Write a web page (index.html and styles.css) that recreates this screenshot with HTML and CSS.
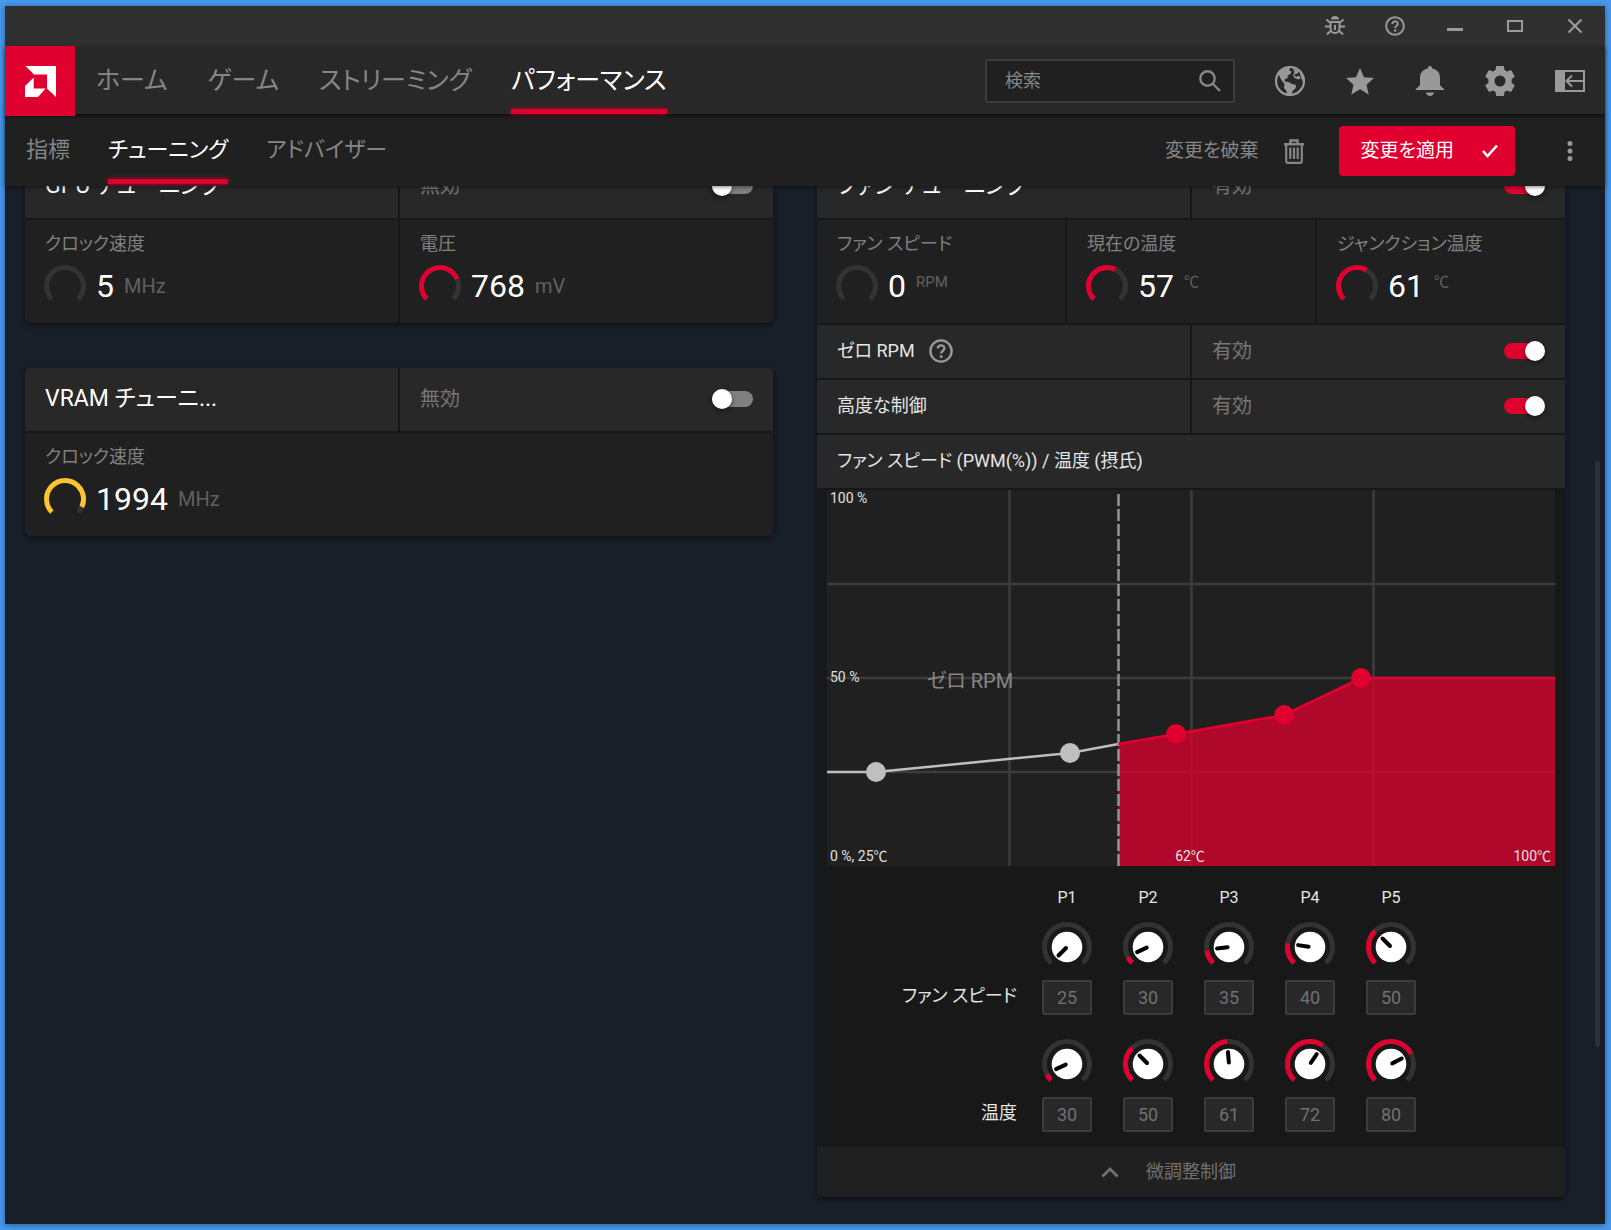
FILE: index.html
```html
<!DOCTYPE html>
<html lang="ja">
  <head>
    <meta charset="UTF-8" />
    <meta name="viewport" content="width=device-width, initial-scale=1.0" />
    <title>パフォーマンス - チューニング</title>

    <link rel="stylesheet" href="styles.css">
  </head>
  <body>
    <svg class="defs" aria-hidden="true">
      <symbol id="help" viewBox="0 0 24 24">
        <circle cx="12" cy="12" r="10.6" fill="none" stroke="currentColor" stroke-width="2.4" />
        <path d="M8.8 9.6c0-4.2 6.6-4.2 6.6-.3 0 2.4-3.2 2.5-3.2 5.1" fill="none" stroke="currentColor" stroke-width="2.3" />
        <circle cx="12.2" cy="17.5" r="1.5" fill="currentColor" />
      </symbol>
      <symbol id="knob" viewBox="0 0 50 50">
        <circle class="track" cx="25" cy="25" r="22.5" pathLength="360" stroke-dasharray="270 360" transform="rotate(135 25 25)" />
        <circle cx="25" cy="25" r="15.3" fill="#fff" />
      </symbol>
    </svg>

    <div class="window">
      <div class="titlebar">
        <button aria-label="バグ報告">
          <svg width="20" height="20" viewBox="0 0 20 20" fill="none" stroke="currentColor" stroke-width="2">
            <path d="M6 3.6a4 3.6 0 0 1 8 0z" fill="currentColor" stroke="none" />
            <path d="M5.5 6h9v6.5c0 6-9 6-9 0zM0 10.5h5M15 10.5h5M1.5 3.5L5.5 7M18.5 3.5L14.5 7M2 18.5L6 14.5M18 18.5L14 14.5M10 9v5" />
          </svg>
        </button>
        <button aria-label="ヘルプ"><svg width="20" height="20"><use href="#help" /></svg></button>
        <button aria-label="最小化"><svg width="16" height="20"><path d="M0 12h16v3H0z" fill="currentColor" /></svg></button>
        <button aria-label="最大化"><svg width="16" height="20"><path d="M1 5h14v10H1z" fill="none" stroke="currentColor" stroke-width="2" /></svg></button>
        <button aria-label="閉じる"><svg width="16" height="20"><path d="M1.5 3.5l13 13M14.5 3.5l-13 13" stroke="currentColor" stroke-width="2.2" /></svg></button>
      </div>

      <header class="header">
        <a class="logo" href="#" aria-label="AMD">
          <svg width="31" height="31" viewBox="0 0 31 31" fill="#fff">
            <path d="M.5 0H31v31l-9-8.5V8.5H9z" />
            <path d="M8.7 11.5v11h12L13 31H0V20z" />
          </svg>
        </a>
        <nav class="nav">
          <a href="#">ホーム</a>
          <a href="#">ゲーム</a>
          <a href="#">ストリーミング</a>
          <a href="#" class="active">パフォーマンス</a>
        </nav>
        <label class="search">
          <input type="text" placeholder="検索" aria-label="検索" />
          <svg width="22" height="22" viewBox="0 0 22 22" fill="none" stroke="currentColor" stroke-width="2.4">
            <circle cx="8.5" cy="8.5" r="7.2" />
            <path d="M13.5 13.5l7.5 7.5" />
          </svg>
        </label>
        <div class="tools">
          <button aria-label="ウェブ">
            <svg width="30" height="30" viewBox="0 0 30 30">
              <circle cx="15" cy="15" r="14" fill="#282828" stroke="currentColor" stroke-width="2.2" />
              <g fill="currentColor">
                <path d="M3 8.5C6 4 10.500 1.500 15.500 1.500L14 4l2.500 1.500-1 2.500-3 1.500.5 2-3.500 2 .5 2 3.500.5 3.500 2 4 1-.5 3.500-3 2.500-1 4-2.500 3-1.500-1-1-6-2.500-3 .5-4L6 13.500 4.500 10z" />
                <path d="M17.500 2l6.500 3-1.500 2.500-3.500 1 2 2.500 3-1.500 1.500 2.500-2 1.500-4-1.500-1.500-3 1.500-3z" />
                <path d="M22 3.500c5 3.500 7 8 6.500 13l-2-3.500-1.500-5.500z" />
              </g>
            </svg>
          </button>
          <button aria-label="お気に入り">
            <svg width="28" height="28" viewBox="0 0 28 28"><path d="M14 1l4 9.2 10 .9-7.5 6.6 2.2 9.8L14 22.3l-8.700 5.200 2.200-9.800L0 11.100l10-.9z" fill="currentColor" /></svg>
          </button>
          <button aria-label="通知">
            <svg width="30" height="30" viewBox="0 0 30 30" fill="currentColor">
              <path d="M12.800 2.500C12.800-.8 17.200-.8 17.200 2.500 22.500 3.500 25 7 25 12v6.500c0 2 4.500 4 4.500 5.500H.5C.5 22.500 5 20.500 5 18.500V12c0-5 2.500-8.500 7.800-9.500zM11 26.500h8c-.5 4.600-7.500 4.600-8 0z" />
            </svg>
          </button>
          <button aria-label="設定">
            <svg width="30" height="30" viewBox="0 0 30 30">
              <path fill="currentColor" fill-rule="evenodd" d="M11.2 0h7.600l.7 4 2.600 1.500 3.900-1.500 3.800 6.600-3.200 2.700v3.400l3.200 2.700-3.800 6.600-3.900-1.500-2.600 1.500-.7 4h-7.600l-.7-4-2.600-1.500L4 26 .2 19.400l3.200-2.700v-3.400L.2 10.600 4 4l3.900 1.500L10.500 4zM15 9.500a5.500 5.500 0 1 0 0 11 5.500 5.500 0 0 0 0-11z" />
            </svg>
          </button>
          <button aria-label="サイドバー">
            <svg width="30" height="22" viewBox="0 0 30 22" fill="none" stroke="currentColor" stroke-width="2">
              <path d="M0 0h10v22H0z" fill="currentColor" stroke="none" />
              <path d="M1 1h28v20H1zM11.5 11H29M17 5.5L11.5 11l5.500 5.500" />
            </svg>
          </button>
        </div>
      </header>

      <div class="subheader">
        <nav class="tabs">
          <a href="#">指標</a>
          <a href="#" class="active">チューニング</a>
          <a href="#">アドバイザー</a>
        </nav>
        <button class="discard">
          変更を破棄
          <svg width="20" height="25" viewBox="0 0 20 25" fill="none" stroke="currentColor" stroke-width="2">
            <path d="M0 5.2h20M6.5 5V1.500h7V5" stroke-width="2.6" />
            <path d="M2.2 6v16.500c0 1 .5 1.300 1.300 1.300h13c.8 0 1.300-.3 1.300-1.300V6M6.300 8.500V20M10 8.500V20M13.700 8.500V20" stroke-width="2.2" />
          </svg>
        </button>
        <button class="apply">
          変更を適用
          <svg width="16" height="14" viewBox="0 0 16 14"><path d="M1 7l4.5 5L15 1.500" fill="none" stroke="#fff" stroke-width="2.6" /></svg>
        </button>
        <button class="more" aria-label="その他">
          <svg width="6" height="20" fill="currentColor"><circle cx="3" cy="2.5" r="2.5" /><circle cx="3" cy="10" r="2.5" /><circle cx="3" cy="17.5" r="2.5" /></svg>
        </button>
      </div>

      <main class="content">
        <div class="columns">
          <div class="column">
            <section class="card">
              <div class="row head">
                <h2 class="cell">GPU チューニング</h2>
                <label class="cell state">無効 <input type="checkbox" class="switch" /></label>
              </div>
              <div class="row">
                <div class="stat">
                  <h3>クロック速度</h3>
                  <div class="reading">
                    <svg class="gauge" width="42" height="42"><circle class="track" cx="21" cy="21" r="18.5" pathLength="360" stroke-dasharray="270 360" /></svg>
                    <b>5</b><span>MHz</span>
                  </div>
                </div>
                <div class="stat">
                  <h3>電圧</h3>
                  <div class="reading">
                    <svg class="gauge" width="42" height="42"><circle class="track" cx="21" cy="21" r="18.5" pathLength="360" stroke-dasharray="270 360" /><circle class="level" cx="21" cy="21" r="18.5" pathLength="360" stroke-dasharray="203 360" /></svg>
                    <b>768</b><span>mV</span>
                  </div>
                </div>
              </div>
            </section>

            <section class="card">
              <div class="row head">
                <h2 class="cell">VRAM チューニ...</h2>
                <label class="cell state">無効 <input type="checkbox" class="switch" /></label>
              </div>
              <div class="row">
                <div class="stat">
                  <h3>クロック速度</h3>
                  <div class="reading">
                    <svg class="gauge" width="42" height="42"><circle class="track" cx="21" cy="21" r="18.5" pathLength="360" stroke-dasharray="270 360" /><circle class="level warn" cx="21" cy="21" r="18.5" pathLength="360" stroke-dasharray="250 360" /></svg>
                    <b>1994</b><span>MHz</span>
                  </div>
                </div>
              </div>
            </section>
          </div>

          <section class="card fan">
            <div class="row head">
              <h2 class="cell">ファン チューニング</h2>
              <label class="cell state">有効 <input type="checkbox" class="switch" checked /></label>
            </div>
            <div class="row">
              <div class="stat">
                <h3>ファン スピード</h3>
                <div class="reading">
                  <svg class="gauge" width="42" height="42"><circle class="track" cx="21" cy="21" r="18.5" pathLength="360" stroke-dasharray="270 360" /></svg>
                  <b>0</b><span class="small">RPM</span>
                </div>
              </div>
              <div class="stat">
                <h3>現在の温度</h3>
                <div class="reading">
                  <svg class="gauge" width="42" height="42"><circle class="track" cx="21" cy="21" r="18.5" pathLength="360" stroke-dasharray="270 360" /><circle class="level" cx="21" cy="21" r="18.5" pathLength="360" stroke-dasharray="162 360" /></svg>
                  <b>57</b><span class="small">℃</span>
                </div>
              </div>
              <div class="stat">
                <h3>ジャンクション温度</h3>
                <div class="reading">
                  <svg class="gauge" width="42" height="42"><circle class="track" cx="21" cy="21" r="18.5" pathLength="360" stroke-dasharray="270 360" /><circle class="level" cx="21" cy="21" r="18.5" pathLength="360" stroke-dasharray="166 360" /></svg>
                  <b>61</b><span class="small">℃</span>
                </div>
              </div>
            </div>
            <div class="row">
              <div class="cell">ゼロ RPM <svg class="info" width="24" height="24"><use href="#help" /></svg></div>
              <label class="cell state">有効 <input type="checkbox" class="switch" checked /></label>
            </div>
            <div class="row">
              <div class="cell">高度な制御</div>
              <label class="cell state">有効 <input type="checkbox" class="switch" checked /></label>
            </div>
            <div class="row">
              <div class="cell">ファン スピード (PWM(%)) / 温度 (摂氏)</div>
            </div>

            <div class="panel">
              <svg class="chart" viewBox="0 0 728 376">
                <rect width="728" height="376" fill="#202020" />
                <path class="grid" d="M182.5 0v376M364.5 0v376M546.5 0v376M0 94h728M0 188h728M0 282h728" />
                <path d="M291.5 254L349 244 457 225 534 188H728V376H291.5z" fill="#e0002f" fill-opacity=".75" />
                <path d="M0 282H49L243 263 291.5 254" fill="none" stroke="#bfbfbd" stroke-width="2.5" />
                <path d="M291.5 4v372" stroke="#949494" stroke-width="2.5" stroke-dasharray="12 3" />
                <path d="M291.5 254L349 244 457 225 534 188H728" fill="none" stroke="#e0002f" stroke-width="2.5" />
                <g fill="#bfbfbd"><circle cx="49" cy="282" r="10" /><circle cx="243" cy="263" r="10" /></g>
                <g fill="#e0002f"><circle cx="349" cy="244" r="10" /><circle cx="457" cy="225" r="10" /><circle cx="534" cy="188" r="10" /></g>
                <text x="3" y="13">100 %</text>
                <text x="3" y="192">50 %</text>
                <text x="3" y="371">0 %, 25℃</text>
                <text x="363" y="371" text-anchor="middle">62℃</text>
                <text x="724" y="371" text-anchor="end">100℃</text>
                <text x="143" y="198" text-anchor="middle" class="zone">ゼロ RPM</text>
              </svg>

              <div class="points">
                <span></span>
                <span class="name">P1</span>
                <span class="name">P2</span>
                <span class="name">P3</span>
                <span class="name">P4</span>
                <span class="name">P5</span>

                <span class="label">ファン スピード</span>
                <label class="point">
                  <svg width="50" height="50"><use href="#knob" /><path class="hand" d="M24 26l-7.5 7.5" /></svg>
                  <input type="text" value="25" aria-label="P1 ファン スピード" />
                </label>
                <label class="point">
                  <svg width="50" height="50"><use href="#knob" /><circle class="level" cx="25" cy="25" r="22.5" pathLength="360" stroke-dasharray="18 360" transform="rotate(135 25 25)" /><path class="hand" d="M24 26l-7.5 7.5" transform="rotate(20 25 25)" /></svg>
                  <input type="text" value="30" aria-label="P2 ファン スピード" />
                </label>
                <label class="point">
                  <svg width="50" height="50"><use href="#knob" /><circle class="level" cx="25" cy="25" r="22.5" pathLength="360" stroke-dasharray="36 360" transform="rotate(135 25 25)" /><path class="hand" d="M24 26l-7.5 7.5" transform="rotate(38 25 25)" /></svg>
                  <input type="text" value="35" aria-label="P3 ファン スピード" />
                </label>
                <label class="point">
                  <svg width="50" height="50"><use href="#knob" /><circle class="level" cx="25" cy="25" r="22.5" pathLength="360" stroke-dasharray="54 360" transform="rotate(135 25 25)" /><path class="hand" d="M24 26l-7.5 7.5" transform="rotate(54 25 25)" /></svg>
                  <input type="text" value="40" aria-label="P4 ファン スピード" />
                </label>
                <label class="point">
                  <svg width="50" height="50"><use href="#knob" /><circle class="level" cx="25" cy="25" r="22.5" pathLength="360" stroke-dasharray="90 360" transform="rotate(135 25 25)" /><path class="hand" d="M24 26l-7.5 7.5" transform="rotate(90 25 25)" /></svg>
                  <input type="text" value="50" aria-label="P5 ファン スピード" />
                </label>

                <span class="label">温度</span>
                <label class="point">
                  <svg width="50" height="50"><use href="#knob" /><circle class="level" cx="25" cy="25" r="22.5" pathLength="360" stroke-dasharray="18 360" transform="rotate(135 25 25)" /><path class="hand" d="M24 26l-7.5 7.5" transform="rotate(20 25 25)" /></svg>
                  <input type="text" value="30" aria-label="P1 温度" />
                </label>
                <label class="point">
                  <svg width="50" height="50"><use href="#knob" /><circle class="level" cx="25" cy="25" r="22.5" pathLength="360" stroke-dasharray="90 360" transform="rotate(135 25 25)" /><path class="hand" d="M24 26l-7.5 7.5" transform="rotate(90 25 25)" /></svg>
                  <input type="text" value="50" aria-label="P2 温度" />
                </label>
                <label class="point">
                  <svg width="50" height="50"><use href="#knob" /><circle class="level" cx="25" cy="25" r="22.5" pathLength="360" stroke-dasharray="130 360" transform="rotate(135 25 25)" /><path class="hand" d="M24 26l-7.5 7.5" transform="rotate(130 25 25)" /></svg>
                  <input type="text" value="61" aria-label="P3 温度" />
                </label>
                <label class="point">
                  <svg width="50" height="50"><use href="#knob" /><circle class="level" cx="25" cy="25" r="22.5" pathLength="360" stroke-dasharray="169 360" transform="rotate(135 25 25)" /><path class="hand" d="M24 26l-7.5 7.5" transform="rotate(169 25 25)" /></svg>
                  <input type="text" value="72" aria-label="P4 温度" />
                </label>
                <label class="point">
                  <svg width="50" height="50"><use href="#knob" /><circle class="level" cx="25" cy="25" r="22.5" pathLength="360" stroke-dasharray="198 360" transform="rotate(135 25 25)" /><path class="hand" d="M24 26l-7.5 7.5" transform="rotate(198 25 25)" /></svg>
                  <input type="text" value="80" aria-label="P5 温度" />
                </label>
              </div>
            </div>

            <button class="collapse">
              <svg width="18" height="12" viewBox="0 0 18 12"><path d="M1.5 10.5L9 3l7.5 7.5" fill="none" stroke="currentColor" stroke-width="2.8" /></svg>
              微調整制御
            </button>
          </section>
        </div>
        <div class="scrollbar"></div>
      </main>
    </div>
  </body>
</html>
```

FILE: styles.css
```css
* {
  box-sizing: border-box;
}

body {
  margin: 0;
  height: 100vh;
  padding: 6px 6px 6px 5px;
  background-color: #4798ec;
  font-family: Roboto, "Noto Sans CJK JP", sans-serif;
  font-feature-settings: "palt";
  font-size: 18px;
  line-height: 24px;
  color: #e6e6e6;
}

a {
  color: inherit;
  text-decoration: none;
}

button,
input {
  font: inherit;
  font-feature-settings: inherit;
  color: inherit;
}

button {
  display: flex;
  align-items: center;
  justify-content: center;
  padding: 0;
  border: 0;
  background: none;
}

h2,
h3 {
  margin: 0;
  font-weight: 400;
}

svg {
  display: block;
  flex: none;
}

.defs {
  position: absolute;
  width: 0;
  height: 0;
}

.window {
  display: flex;
  flex-direction: column;
  height: 100%;
  background-color: #181f28;
  box-shadow: 0 1px 6px rgba(0, 0, 0, 0.4);
}

/* top bars */
.titlebar {
  display: flex;
  justify-content: flex-end;
  height: 40px;
  background-color: #303030;
  color: #999;
}

.titlebar button {
  width: 60px;
}

.header {
  position: relative;
  z-index: 3;
  display: flex;
  align-items: center;
  height: 68px;
  padding-top: 2px;
  background-color: #282828;
  color: #868686;
  box-shadow: 0 2px 4px rgba(0, 0, 0, 0.6);
}

.logo {
  display: flex;
  align-items: center;
  justify-content: center;
  align-self: stretch;
  width: 70px;
  margin: -2px 0;
  background-color: #e0002f;
}

.nav,
.tabs {
  display: flex;
  align-self: stretch;
  gap: 40px;
  padding-left: 21px;
  font-size: 25px;
}

.nav a,
.tabs a {
  position: relative;
  display: flex;
  align-items: center;
  white-space: nowrap;
}

.nav .active,
.tabs .active {
  color: #fff;
}

.active::after {
  content: "";
  position: absolute;
  left: 0;
  right: 0;
  bottom: 0;
  height: 5px;
  background-color: #e0002f;
  box-shadow: 0 0 5px rgba(224, 0, 47, 0.8);
}

.search {
  display: flex;
  align-items: center;
  width: 250px;
  height: 44px;
  margin-left: auto;
  padding: 0 12px 0 18px;
  border: 2px solid #3d3d3d;
  border-radius: 2px;
  background-color: #202020;
}

.search input {
  flex: 1;
  min-width: 0;
  padding: 0;
  border: 0;
  outline: 0;
  background: none;
}

.search input::placeholder {
  color: #868686;
}

.tools {
  display: flex;
  margin-left: 20px;
  color: #999;
}

.tools button {
  width: 70px;
  height: 44px;
}

.subheader {
  position: relative;
  z-index: 2;
  display: flex;
  align-items: center;
  height: 72px;
  padding-top: 2px;
  background-color: #202020;
  color: #868686;
  box-shadow: 0 1px 4px rgba(0, 0, 0, 0.5);
}

.tabs {
  gap: 38px;
  margin-right: auto;
  padding-bottom: 2px;
  font-size: 22px;
}

.discard {
  gap: 26px;
  font-size: 19px;
}

.apply {
  gap: 28px;
  height: 50px;
  margin-left: 35px;
  padding: 0 17px 0 21px;
  border-radius: 4px;
  background-color: #e0002f;
  font-size: 19px;
  color: #fff;
}

.more {
  width: 70px;
  height: 50px;
  margin-left: 20px;
  color: #999;
}

/* scrolled page */
.content {
  position: relative;
  flex: 1;
  min-height: 0;
  overflow: hidden;
}

.columns {
  display: grid;
  grid-template-columns: 1fr 1fr;
  align-items: start;
  gap: 44px;
  margin-top: -31px;
  padding: 0 40px 0 20px;
}

.column {
  display: grid;
  gap: 45px;
}

.scrollbar {
  position: absolute;
  top: 275px;
  right: 5px;
  width: 5px;
  height: 586px;
  border-radius: 3px;
  background-color: #29323c;
}

.card {
  display: grid;
  gap: 2px;
  border-radius: 5px;
  background-color: #171717;
  box-shadow: 0 2px 5px rgba(0, 0, 0, 0.5);
  overflow: hidden;
}

.row {
  display: grid;
  grid-auto-flow: column;
  grid-auto-columns: 1fr;
  gap: 2px;
}

.cell {
  display: flex;
  align-items: center;
  height: 53px;
  padding: 0 20px 2px;
  background-color: #282828;
  white-space: nowrap;
}

.head .cell {
  height: 63px;
}

h2 {
  font-size: 23px;
  color: #fff;
}

.state {
  justify-content: space-between;
  font-size: 20px;
  color: #777;
}

.info {
  margin-left: 14px;
  color: #999;
}

.switch {
  appearance: none;
  position: relative;
  width: 41px;
  height: 20px;
  margin: 0;
}

.switch::before {
  content: "";
  position: absolute;
  inset: 2px 0;
  border-radius: 8px;
  background-color: #808080;
}

.switch::after {
  content: "";
  position: absolute;
  left: 0;
  width: 20px;
  height: 20px;
  border-radius: 50%;
  background-color: #fff;
  box-shadow: 0 2px 5px rgba(0, 0, 0, 0.5);
}

.switch:checked::before {
  background-color: #e0002f;
}

.switch:checked::after {
  left: 21px;
}

.stat {
  height: 103px;
  padding: 12px 19px;
  background-color: #202020;
}

h3 {
  padding-left: 1px;
  font-size: 18px;
  color: #808080;
}

.reading {
  display: flex;
  align-items: center;
  height: 42px;
  margin-top: 9px;
  font-size: 20px;
  color: #606060;
}

.reading b {
  margin: 0 10px;
  font-size: 32px;
  font-weight: 400;
  color: #fff;
}

.reading .small {
  padding-bottom: 8px;
  font-size: 15px;
}

.track,
.level {
  fill: none;
  stroke: #333;
  stroke-width: 5px;
}

.level {
  stroke: #e0002f;
}

.warn {
  stroke: #ffc52e;
}

.gauge circle {
  transform: rotate(135deg);
  transform-origin: 21px 21px;
}

/* fan curve */
.panel {
  padding: 0 10px 15px;
  background-color: #181818;
}

.chart {
  width: 100%;
  height: auto;
}

.grid {
  stroke: #3c3c3c;
  stroke-width: 2.5px;
}

.chart text {
  font-size: 14px;
  fill: #e0e0e0;
}

.chart .zone {
  font-size: 20px;
  fill: #868686;
}

.points {
  display: grid;
  grid-template-columns: 174px repeat(5, 50px);
  justify-content: start;
  column-gap: 31px;
  row-gap: 24px;
  margin-top: 20px;
  padding-left: 10px;
}

.name {
  margin-bottom: -12px;
  font-size: 16px;
  text-align: center;
}

.label {
  align-self: end;
  padding-bottom: 7px;
  margin-right: -6px;
  text-align: right;
  white-space: nowrap;
}

.point {
  display: grid;
  gap: 8px;
}

.point input {
  width: 50px;
  height: 35px;
  padding: 0;
  border: 2px solid #3c3c3c;
  border-radius: 2px;
  background-color: #282828;
  text-align: center;
  color: #707070;
}

.hand {
  fill: none;
  stroke: #000;
  stroke-width: 4px;
  stroke-linecap: round;
}

.collapse {
  gap: 27px;
  height: 50px;
  margin-top: -2px;
  padding-right: 45px;
  background-color: #202020;
  color: #707070;
}
```
